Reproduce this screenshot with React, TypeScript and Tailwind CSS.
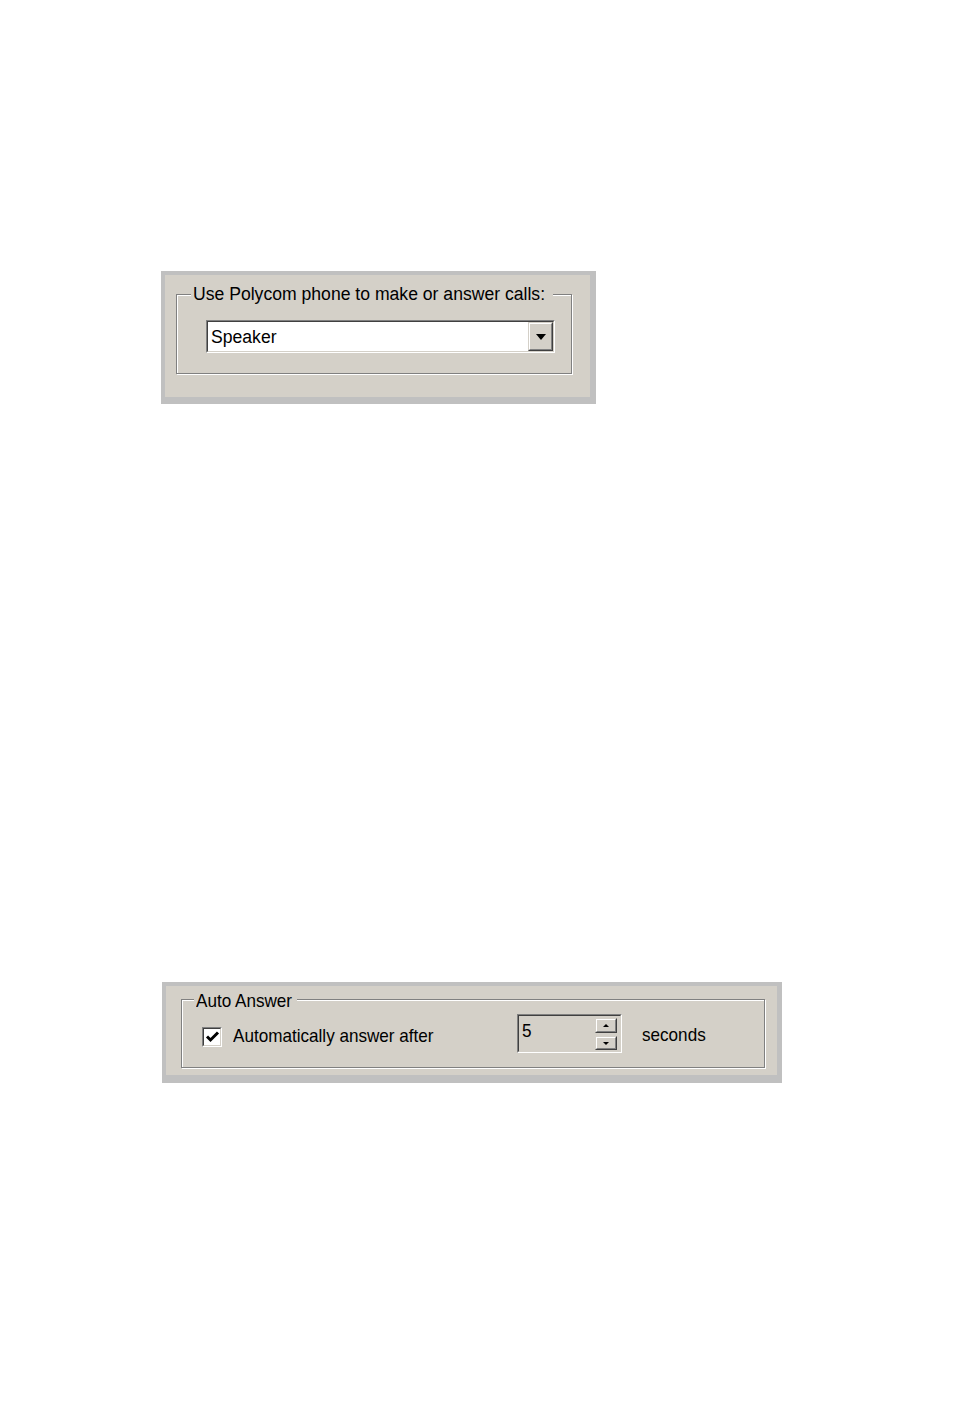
import React from "react";

const font = { fontFamily: '"Liberation Sans", Arial, sans-serif' };

// classic win32 sunken edge: outer gray/white, inner dark/face
function Sunken({ className = "", innerClass = "", children }: { className?: string; innerClass?: string; children?: React.ReactNode }) {
  return (
    <div className={`border border-t-[#808080] border-l-[#808080] border-b-white border-r-white ${className}`}>
      <div className={`h-full w-full border border-t-[#404040] border-l-[#404040] border-b-[#d4d0c8] border-r-[#d4d0c8] ${innerClass}`}>
        {children}
      </div>
    </div>
  );
}

function Raised({ className = "", children }: { className?: string; children?: React.ReactNode }) {
  return (
    <div className={`border border-t-[#d4d0c8] border-l-[#d4d0c8] border-b-[#404040] border-r-[#404040] bg-[#d4d0c8] ${className}`}>
      <div className="flex h-full w-full items-center justify-center border border-t-white border-l-white border-b-[#808080] border-r-[#808080]">
        {children}
      </div>
    </div>
  );
}

function GroupBox({ legend, legendLeft, className = "", legendClass = "", children }: { legend: React.ReactNode; legendLeft: string; className?: string; legendClass?: string; children?: React.ReactNode }) {
  return (
    <div className={`relative border border-[#808080] shadow-[inset_1px_1px_0_#fff,1px_1px_0_#fff] ${className}`}>
      <div className={`absolute top-0 -translate-y-1/2 whitespace-nowrap bg-[#d4d0c8] px-[2px] leading-none text-black ${legendLeft} ${legendClass}`}>
        {legend}
      </div>
      {children}
    </div>
  );
}

export default function App() {
  return (
    <div className="min-h-[1411px] w-[954px] bg-white" style={font}>
      <div className="h-[271px]" />
      {/* Polycom phone panel */}
      <div className="ml-[161px] h-[133px] w-[435px] border-b-[7px] border-l-4 border-r-[6px] border-t-4 border-[#c0c0c0] bg-[#d4d0c8]">
        <GroupBox
          legend="Use Polycom phone to make or answer calls:"
          legendLeft="left-[14px]"
          legendClass="text-[17.6px] pr-[8px]"
          className="ml-[11px] mt-[19px] h-[80px] w-[396px]"
        >
          <Sunken className="ml-[29px] mt-[25px] h-[33px] w-[349px]" innerClass="flex bg-white">
            <div className="flex flex-1 items-center pl-[3px] pt-[3px] text-[17.6px] leading-none text-black">Speaker</div>
            <Raised className="h-[29px] w-[25px]">
              <svg width="10" height="6" viewBox="0 0 10 6">
                <path d="M0 0h10L5 6z" fill="#000" />
              </svg>
            </Raised>
          </Sunken>
        </GroupBox>
      </div>

      <div className="h-[578px]" />
      {/* Auto answer panel */}
      <div className="ml-[162px] h-[101px] w-[620px] border-b-[8px] border-l-4 border-r-[5px] border-t-4 border-[#c0c0c0] bg-[#d4d0c8]">
        <GroupBox
          legend={<span className="inline-block origin-left scale-x-[0.9]">Auto Answer</span>}
          legendLeft="left-[12px]"
          legendClass="text-[19px] w-[103px]"
          className="ml-[15px] mt-[13px] h-[69px] w-[584px]"
        >
          <div className="flex items-start pt-[14px]">
            <Sunken className="ml-[20px] mt-[13px] h-[20px] w-[20px]" innerClass="bg-white flex items-center justify-center">
              <svg width="15" height="14" viewBox="0 0 15 14">
                <path d="M2 6.5l3.5 3.5 7.5-7.5" stroke="#000" strokeWidth="3" fill="none" />
              </svg>
            </Sunken>
            <div className="ml-[11px] mt-[12px] w-[284px] whitespace-nowrap text-[19px] leading-none text-black">
              <span className="inline-block origin-left scale-x-[0.9]">Automatically answer after</span>
            </div>
            <Sunken className="h-[39px] w-[105px]" innerClass="flex bg-[#d4d0c8]">
              <div className="flex-1 pl-[3px] pt-[5px] text-[19px] leading-none text-black">
                <span className="inline-block origin-left scale-x-[0.9]">5</span>
              </div>
              <div className="mr-[3px] mt-[2px] flex flex-col gap-[3px]">
                <Raised className="h-[15px] w-[22px]">
                  <svg width="6" height="3" viewBox="0 0 6 3"><path d="M0 3h6L3 0z" fill="#000" /></svg>
                </Raised>
                <Raised className="h-[14px] w-[22px]">
                  <svg width="6" height="3" viewBox="0 0 6 3"><path d="M0 0h6L3 3z" fill="#000" /></svg>
                </Raised>
              </div>
            </Sunken>
            <div className="ml-[20px] mt-[11px] whitespace-nowrap text-[19px] leading-none text-black">
              <span className="inline-block origin-left scale-x-[0.9]">seconds</span>
            </div>
          </div>
        </GroupBox>
      </div>
    </div>
  );
}
